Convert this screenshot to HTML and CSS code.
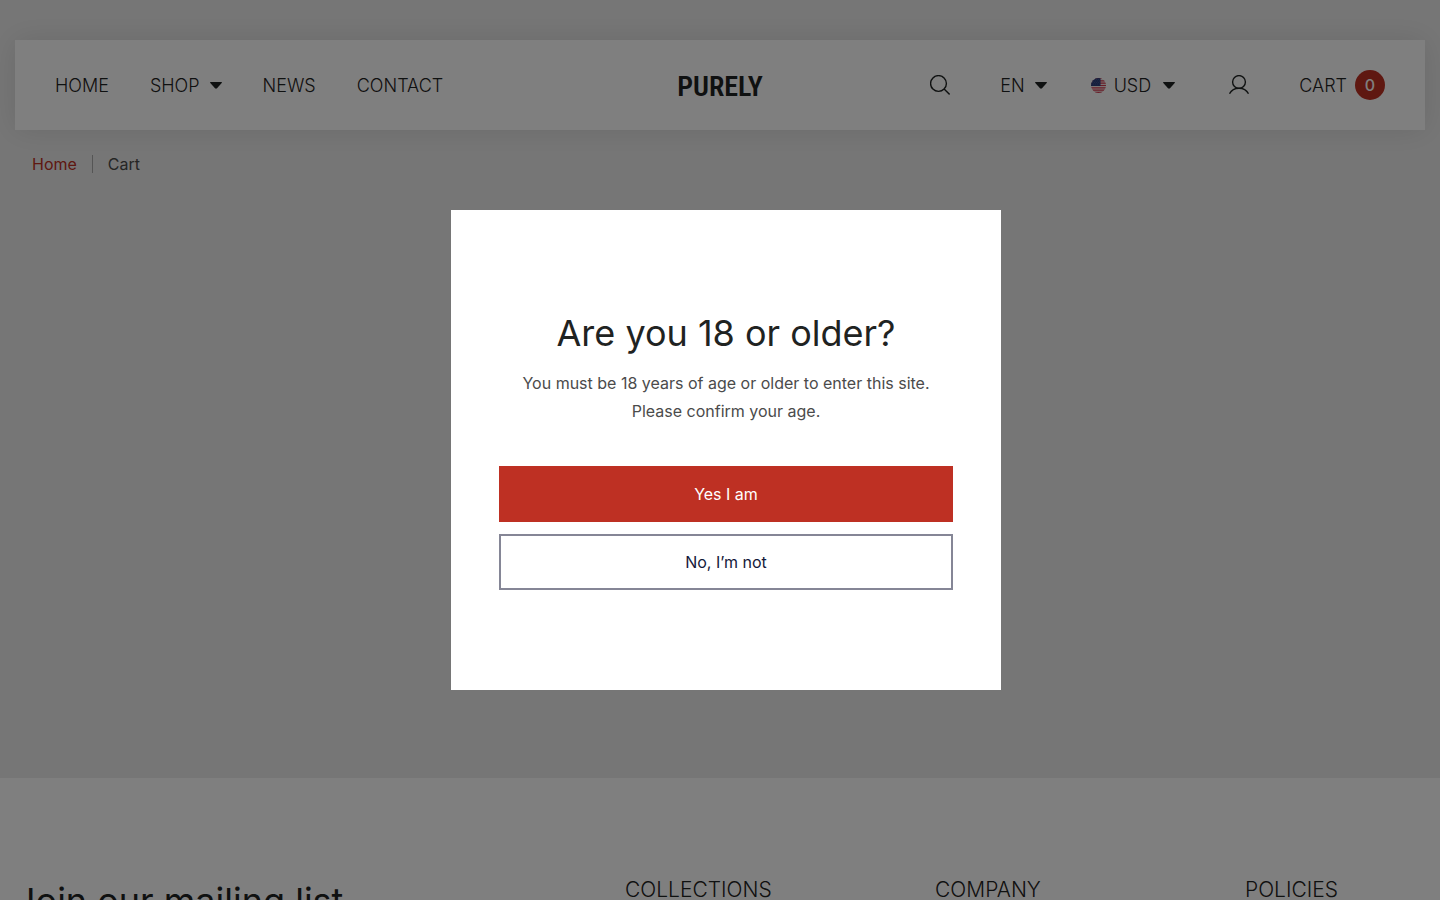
FILE: index.html
```html
<!DOCTYPE html>
<html lang="en">
<head>
    <meta charset="UTF-8">
    <meta name="viewport" content="width=device-width, initial-scale=1.0">
    <title>Cart - Purely</title>
    <link rel="stylesheet" href="styles.css">
</head>
<body>

    <div class="page">
        <header class="header">
            <nav class="nav" aria-label="Main">
                <a href="#">HOME</a>
                <a href="#" class="drop">SHOP
                    <svg class="caret" viewBox="0 0 12 7" aria-hidden="true"><path d="M0.5 0h11q.8.2.2.9L7 6.2q-1 .9-2 0L.3.9Q-.2.2.5 0z"/></svg>
                </a>
                <a href="#">NEWS</a>
                <a href="#">CONTACT</a>
            </nav>

            <a href="#" class="logo">PURELY</a>

            <div class="tools">
                <button type="button" class="tool search" aria-label="Search">
                    <svg class="icon" viewBox="0 0 20 20" aria-hidden="true"><circle cx="8.5" cy="8.5" r="7.9"/><path d="M14.1 14.1l5.5 5.3"/></svg>
                </button>
                <button type="button" class="tool">EN
                    <svg class="caret" viewBox="0 0 12 7" aria-hidden="true"><path d="M0.5 0h11q.8.2.2.9L7 6.2q-1 .9-2 0L.3.9Q-.2.2.5 0z"/></svg>
                </button>
                <button type="button" class="tool currency">
                    <svg class="flag" viewBox="0 0 15 15" aria-hidden="true">
                        <clipPath id="round"><circle cx="7.5" cy="7.5" r="7.5"/></clipPath>
                        <g clip-path="url(#round)">
                            <path fill="#f3e6e8" d="M0 0h15v15H0z"/>
                            <path fill="#d23a4e" d="M0 0h15v1H0zM0 2.3h15v1.2H0zM0 4.6h15v1.2H0zM0 6.9h15v1.2H0zM0 9.2h15v1.2H0zM0 11.5h15v1.2H0zM0 13.8h15V15H0z"/>
                            <path fill="#2c3f7c" d="M0 0h9.5v8H0z"/>
                            <path stroke="#8190bb" stroke-width=".5" stroke-dasharray=".5 1.5" d="M1 1.5h8M2 3h7M1 4.5h8M2 6h7"/>
                        </g>
                    </svg>
                    USD
                    <svg class="caret" viewBox="0 0 12 7" aria-hidden="true"><path d="M0.5 0h11q.8.2.2.9L7 6.2q-1 .9-2 0L.3.9Q-.2.2.5 0z"/></svg>
                </button>
                <a href="#" class="tool account" aria-label="Account">
                    <svg class="icon" viewBox="0 0 20 20" aria-hidden="true"><circle cx="10" cy="7" r="6.4"/><path d="M.5 18.8C2.2 15.4 5.8 13.2 10 13.2s7.8 2.2 9.5 5.6"/></svg>
                </a>
                <a href="#" class="tool cart">CART <span class="count">0</span></a>
            </div>
        </header>

        <main class="main">
            <ol class="crumbs">
                <li><a href="#">Home</a></li>
                <li>Cart</li>
            </ol>
        </main>
    </div>

    <footer class="footer">
        <h2 class="join">Join our mailing list</h2>
        <h3>COLLECTIONS</h3>
        <h3>COMPANY</h3>
        <h3>POLICIES</h3>
    </footer>

    <div class="overlay">
        <div class="modal" role="dialog" aria-modal="true" aria-labelledby="age_title">
            <h2 id="age_title">Are you 18 or older?</h2>
            <p>You must be 18 years of age or older to enter this site. Please confirm your age.</p>
            <button type="button" class="btn yes">Yes I am</button>
            <button type="button" class="btn no">No, I’m not</button>
        </div>
    </div>

</body>
</html>
```
FILE: styles.css
```css
*{margin:0;padding:0;box-sizing:border-box;}
body{font-family:Inter, "Liberation Sans", sans-serif;font-size:16px;color:#4b4b4b;background-color:#fff;overflow:hidden;}
a{color:inherit;text-decoration:none;}
button{font:inherit;color:inherit;background:none;border:0;cursor:pointer;}
h2, h3{color:#1f2322;}
h2{font-size:36px;font-weight:400;line-height:46px;}
h3{font-size:21px;font-weight:300;line-height:24px;}

.page{background-color:#ededed;padding:40px 15px 0;}

/* header */
.header{display:grid;grid-template-columns:1fr auto 1fr;align-items:center;height:90px;padding:0 40px;background-color:#fff;box-shadow:0 0 30px rgba(0,0,0,.1);font-size:18px;font-weight:300;color:#1f2322;}
.nav{display:flex;gap:41px;}
.drop{display:flex;align-items:center;gap:10px;}
.logo{padding-top:4px;font-family:"Roboto Condensed", Roboto, sans-serif;font-size:28px;font-weight:600;line-height:32px;}
.tools{display:flex;align-items:center;justify-content:flex-end;gap:44px;}
.tool{display:flex;align-items:center;gap:10px;}
.search{margin-right:6px;}
.currency{gap:8px;}
.currency .caret{margin-left:4px;}
.account{margin:0 6px 0 10px;}
.cart{gap:8px;}
.count{width:30px;height:30px;border-radius:50%;background-color:#be3023;color:#fff;font-size:16px;font-weight:500;line-height:30px;text-align:center;}
.icon{width:20px;height:20px;fill:none;stroke:#1f2322;stroke-width:1.4;}
.caret{width:12px;height:7px;fill:#1f2322;}
.flag{width:15px;height:15px;}

/* breadcrumb */
.main{min-height:648px;padding:20px 17px;}
.crumbs{display:flex;align-items:center;list-style:none;line-height:28px;}
.crumbs a{color:#be3023;}
.crumbs li + li{display:flex;align-items:center;}
.crumbs li + li::before{content:"";width:1px;height:18px;margin:0 15px;background-color:#aaa;}

/* footer */
.footer{display:grid;grid-template-columns:1fr 290px 290px 170px;column-gap:20px;padding:100px 25px 100px 15px;}

/* age check */
.overlay{position:fixed;inset:0;display:flex;align-items:center;justify-content:center;padding-left:12px;background-color:rgba(0,0,0,.5);}
.modal{width:550px;padding:100px 48px;background-color:#fff;text-align:center;}
.modal h2{margin-bottom:13px;}
.modal p{margin-bottom:41px;line-height:28px;}
.btn{display:block;width:100%;height:56px;border:2px solid #be3023;}
.btn + .btn{margin-top:12px;}
.yes{background-color:#be3023;color:#fff;}
.no{border-color:#858696;color:#14193a;}
```
